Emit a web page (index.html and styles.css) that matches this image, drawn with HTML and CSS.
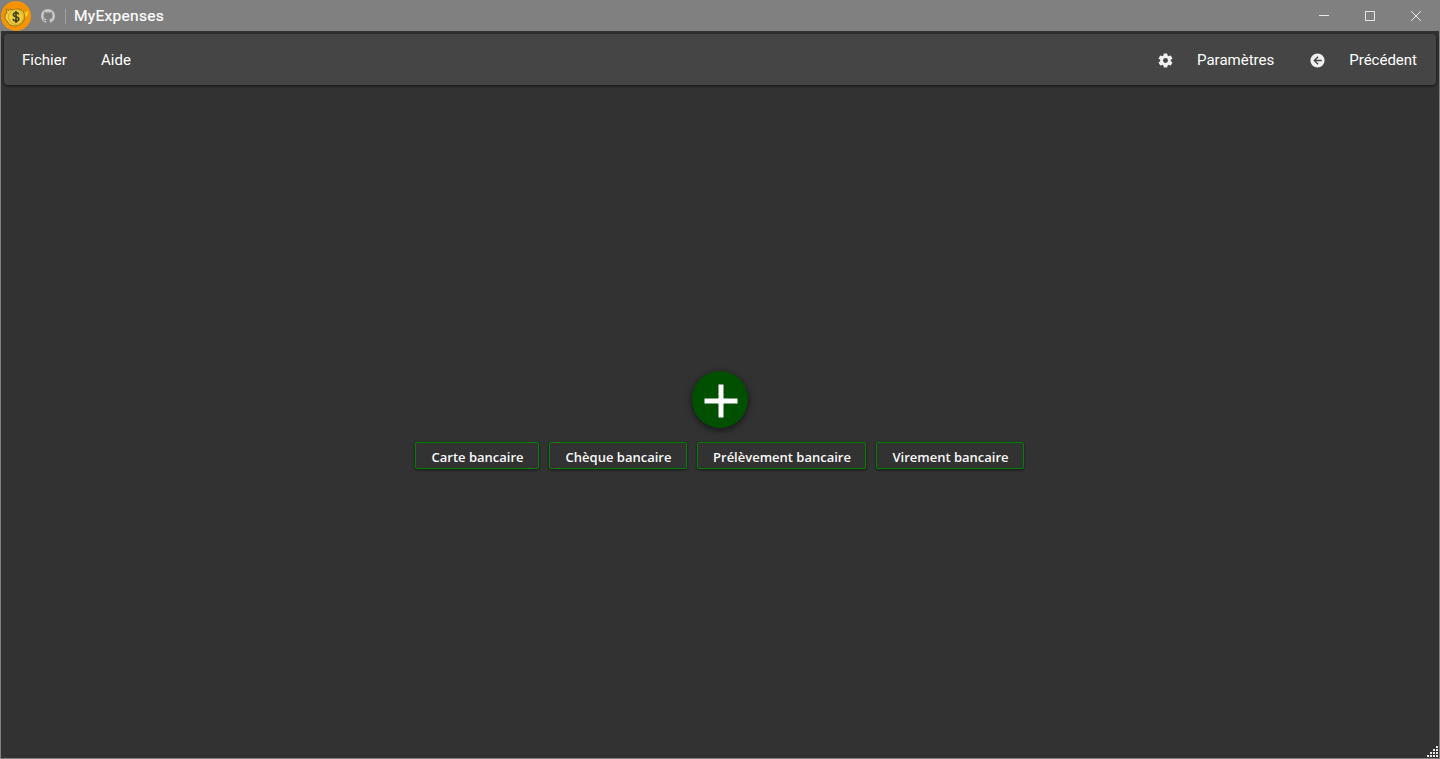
FILE: index.html
```html
<!DOCTYPE html>
<html lang="fr">
<head>
<meta charset="utf-8">
<title>MyExpenses</title>
<link rel="stylesheet" href="styles.css">
</head>
<body>
<div class="window">
  <header class="titlebar">
    <svg class="logo" viewBox="0 0 30 30">
      <circle cx="15" cy="15" r="15" fill="#f69400"/>
      <path d="M22 13l1.500-2 1 1 2-2.500 1 1-1 4-4 3z" fill="#ffc928"/>
      <path d="M5 8l3 1.500L9 8l3 1c5-2 9-1 11 3 2.500 6-2 13-9 13-4 0-7-2-8-5l-2-2v-5l2-1z" fill="#f2cc35" stroke="#786624" stroke-width=".8"/>
      <circle cx="15" cy="16" r="7.500" fill="#f4cd32" stroke="#b2942d" stroke-width=".6"/>
      <path d="M17.800 13.500c-.3-1.200-1.300-1.700-2.800-1.700-1.600 0-2.600.7-2.600 1.900 0 2.700 5.400 1.300 5.400 4.200 0 1.300-1.100 2-2.800 2-1.600 0-2.700-.7-3-2M15 10v12" fill="none" stroke="#38412b" stroke-width="1.600"/>
    </svg>
    <svg class="github" viewBox="0 0 16 16"><path fill="#c6c6c6" d="M8 0C3.580 0 0 3.580 0 8c0 3.540 2.290 6.530 5.470 7.590.4.070.55-.17.55-.38 0-.19-.01-.82-.01-1.490-2.010.37-2.530-.49-2.690-.94-.09-.23-.48-.94-.82-1.130-.28-.15-.68-.52-.01-.53.63-.01 1.080.58 1.230.82.72 1.210 1.870.87 2.330.66.070-.52.28-.87.51-1.070-1.780-.2-3.640-.89-3.640-3.950 0-.87.31-1.590.82-2.150-.08-.2-.36-1.020.08-2.120 0 0 .67-.21 2.200.82.64-.18 1.320-.27 2-.27s1.360.09 2 .27c1.530-1.040 2.200-.82 2.200-.82.44 1.100.16 1.920.08 2.120.51.56.82 1.270.82 2.150 0 3.070-1.870 3.750-3.650 3.950.29.25.54.73.54 1.480 0 1.070-.01 1.930-.01 2.200 0 .21.15.46.55.38A8.010 8.010 0 0 0 16 8c0-4.420-3.580-8-8-8z"/></svg>
    <span class="divider"></span>
    <span class="title">MyExpenses</span>
    <div class="controls">
      <svg class="control" viewBox="0 0 46 30"><path d="M18 14.500h10"/></svg>
      <svg class="control" viewBox="0 0 46 30"><path d="M18.500 10.500h9v9h-9z"/></svg>
      <svg class="control" viewBox="0 0 46 30"><path d="M18 10l10 10M28 10l-10 10"/></svg>
    </div>
  </header>
  <nav class="menubar">
    <span class="item file">Fichier</span>
    <span class="item">Aide</span>
    <div class="actions">
      <svg class="icon cog" viewBox="0 0 24 24"><path d="M12 15.500A3.500 3.500 0 0 1 8.500 12 3.500 3.500 0 0 1 12 8.500a3.500 3.500 0 0 1 3.500 3.500 3.500 3.500 0 0 1-3.500 3.500m7.430-2.530c.04-.32.07-.64.07-.97s-.03-.66-.07-1l2.110-1.630c.19-.15.24-.42.12-.64l-2-3.460c-.12-.22-.39-.31-.61-.22l-2.490 1c-.52-.39-1.060-.73-1.690-.98l-.37-2.650A.506.506 0 0 0 14 2h-4c-.25 0-.46.18-.5.42l-.37 2.650c-.63.25-1.170.59-1.690.98l-2.490-1c-.22-.09-.49 0-.61.22l-2 3.460c-.13.22-.07.49.12.64L4.570 11c-.04.34-.07.67-.07 1s.03.65.07.97l-2.110 1.660c-.19.15-.25.42-.12.64l2 3.460c.12.22.39.3.61.22l2.490-1.010c.52.4 1.060.74 1.690.99l.37 2.650c.04.24.25.42.5.42h4c.25 0 .46-.18.5-.42l.37-2.650c.63-.26 1.170-.59 1.690-.99l2.490 1.010c.22.08.49 0 .61-.22l2-3.460c.12-.22.07-.49-.12-.64z"/></svg>
      <span class="item settings">Paramètres</span>
      <svg class="icon back" viewBox="0 0 24 24"><path d="M2 12A10 10 0 0 1 12 2a10 10 0 0 1 10 10 10 10 0 0 1-10 10A10 10 0 0 1 2 12m16-1h-8l3.500-3.500-1.420-1.420L6.160 12l5.920 5.920 1.420-1.420L10 13h8z"/></svg>
      <span class="item previous">Précédent</span>
    </div>
  </nav>
  <main class="content">
    <div class="add"><svg class="plus" viewBox="0 0 34 34"><path d="M17 .5v33M.5 17h33"/></svg></div>
    <div class="modes">
      <div class="mode card"><span>Carte bancaire</span></div>
      <div class="mode cheque"><span>Chèque bancaire</span></div>
      <div class="mode debit"><span>Prélèvement bancaire</span></div>
      <div class="mode transfer"><span>Virement bancaire</span></div>
    </div>
  </main>
  <svg class="grip" viewBox="0 0 11 11"><path d="M9 0h2v2H9zM6 3h2v2H6zM9 3h2v2H9zM3 6h2v2H3zM6 6h2v2H6zM9 6h2v2H9zM0 9h2v2H0zM3 9h2v2H3zM6 9h2v2H6zM9 9h2v2H9z"/></svg>
</div>
</body>
</html>
```
FILE: styles.css
```css
* { box-sizing: border-box; }
body { margin: 0; background: #323232; font-family: Roboto, sans-serif; color: #fff; }
svg { display: block; flex: none; }
.window { position: relative; height: 759px; border: 1px solid #808080; display: flex; flex-direction: column; overflow: hidden; }
.titlebar { height: 30px; flex: none; background: #808080; display: flex; align-items: center; }
.logo { width: 30px; height: 30px; }
.github { width: 14px; height: 14px; margin-left: 10px; }
.divider { width: 1px; height: 15px; background: #a2a2a2; margin: 0 8px 0 10px; }
.title { font-size: 15.500px; font-weight: 400; line-height: 30px; letter-spacing: .3px; -webkit-text-stroke: .2px #fff; }
.controls { display: flex; margin-left: auto; }
.control { width: 46px; height: 30px; fill: none; stroke: #e8e8e8; stroke-width: 1; }
.menubar { height: 51px; flex: none; margin: 3px; padding: 0 19px 0 18px; border-radius: 4px; background: #454545; display: flex; align-items: center; box-shadow: 0 1px 3px rgba(0,0,0,.65); }
.item { font-size: 15px; line-height: 20px; color: #fff; white-space: nowrap; }
.file { width: 79px; }
.actions { margin-left: auto; display: flex; align-items: center; }
.icon { width: 17px; height: 17px; margin-top: 1px; fill: #f0f0f0; }
.settings { margin: 0 35px 0 23.500px; }
.previous { margin-left: 23px; }
.content { flex: 1; display: flex; flex-direction: column; align-items: center; padding-top: 283px; }
.add { width: 56px; height: 57px; flex: none; border-radius: 50%; background: #005000; display: flex; align-items: center; justify-content: center; box-shadow: 0 2px 7px rgba(0,0,0,.6); }
.plus { width: 34px; height: 34px; margin: 2px 0 0 2px; stroke: #fff; stroke-width: 5; }
.modes { display: flex; gap: 10px; margin-top: 14px; margin-right: 1px; }
.mode { height: 27px; border: 1px solid #008000; border-radius: 2px; box-shadow: 0 1px 3px rgba(0,0,0,.55); display: flex; align-items: center; justify-content: center; padding: 3px 0 0 1px; font: 600 13px/20px "Open Sans", "Noto Sans", sans-serif; color: #fafafa; white-space: nowrap; }
.card { width: 124px; }
.cheque { width: 138px; }
.debit { width: 169px; }
.transfer { width: 148px; }
.grip { position: absolute; right: 1px; bottom: 1px; width: 11px; height: 11px; fill: #e8e8e8; }
```
